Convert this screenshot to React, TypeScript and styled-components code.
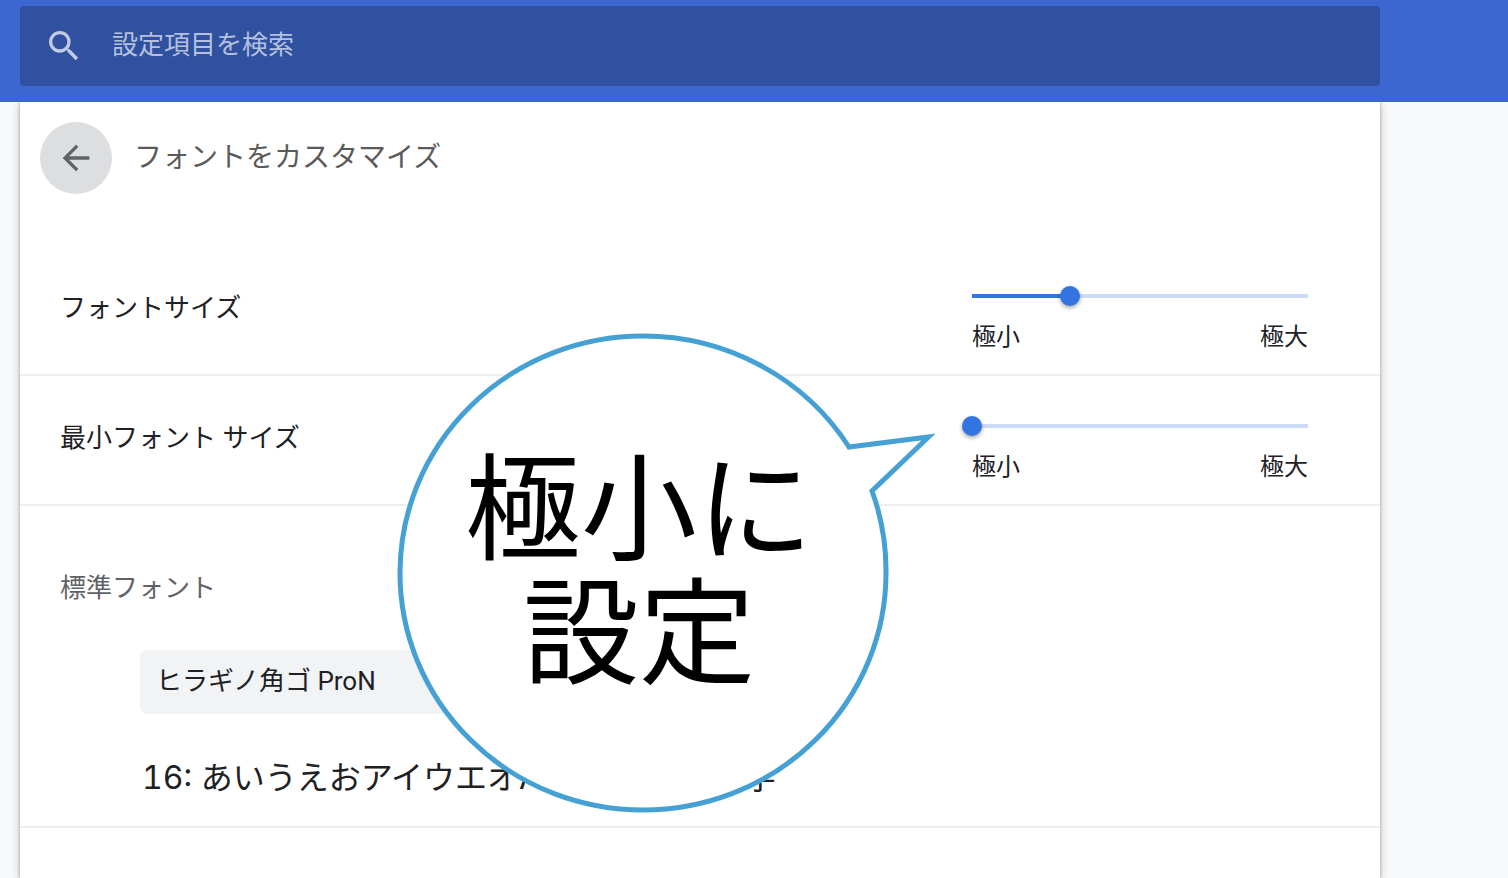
import React, { useState } from "react";
import styled, { createGlobalStyle } from "styled-components";
import { MdArrowBack, MdSearch } from "react-icons/md";

const GlobalStyle = createGlobalStyle`
  *, *::before, *::after { box-sizing: border-box; }
  body {
    margin: 0;
    background: #f8f9fb;
    color: #202124;
    font-family: Roboto, "Noto Sans CJK JP", sans-serif;
    font-size: 26px;
    line-height: 36px;
  }
`;

const Page = styled.div`
  display: flex;
  flex-direction: column;
  min-height: 100vh;
`;

const Toolbar = styled.header`
  position: relative;
  z-index: 1;
  padding: 6px 128px 16px 20px;
  background: #3c67d0;
`;

const SearchBox = styled.label`
  display: flex;
  align-items: center;
  gap: 28px;
  height: 80px;
  padding: 0 24px;
  border-radius: 4px;
  background: #3050a0;
  color: #c1cbe3;
`;

const SearchInput = styled.input`
  flex: 1;
  min-width: 0;
  height: 40px;
  padding: 0 0 2px;
  border: 0;
  outline: 0;
  background: transparent;
  color: #ffffff;
  font: inherit;

  &::placeholder {
    color: #b4c0de;
    opacity: 1;
  }
`;

const Content = styled.main`
  flex: 1;
  display: flex;
  padding: 0 128px 0 20px;
`;

const Card = styled.section`
  position: relative;
  flex: 1;
  min-width: 0;
  background: #ffffff;
  box-shadow: 0 2px 10px rgba(0, 0, 0, 0.2), 0 0 3px rgba(0, 0, 0, 0.3);
`;

const CardHeader = styled.div`
  display: flex;
  align-items: center;
  gap: 22px;
  height: 144px;
  padding: 20px 20px 52px;
`;

const BackButton = styled.button`
  display: flex;
  align-items: center;
  justify-content: center;
  width: 72px;
  height: 72px;
  padding: 0;
  border: 0;
  border-radius: 50%;
  background: #dddee0;
  color: #5f6368;
`;

const Title = styled.h1`
  margin: 0;
  color: #5a5a5a;
  font-size: 28px;
  font-weight: 400;
  line-height: 36px;
`;

const SettingRow = styled.div`
  display: flex;
  align-items: center;
  justify-content: space-between;
  height: 130px;
  padding: 0 72px 4px 40px;
  border-bottom: 2px solid #efefef;
`;

const SliderBlock = styled.div`
  width: 336px;
  padding-top: 25px;
`;

const Slider = styled.input<{ $ratio: number }>`
  appearance: none;
  display: block;
  width: calc(100% + 20px);
  height: 20px;
  margin: 0 -10px 13px;
  background: transparent;

  &::-webkit-slider-runnable-track {
    height: 4px;
    background: linear-gradient(
      to right,
      transparent 10px,
      #3274e0 10px,
      #3274e0 calc(10px + (100% - 20px) * ${(p) => p.$ratio}),
      #cbdcf8 calc(10px + (100% - 20px) * ${(p) => p.$ratio}),
      #cbdcf8 calc(100% - 10px),
      transparent calc(100% - 10px)
    );
  }

  &::-webkit-slider-thumb {
    appearance: none;
    width: 20px;
    height: 20px;
    margin-top: -8px;
    border-radius: 50%;
    background: #3274e0;
    box-shadow: 0 2px 4px rgba(0, 0, 0, 0.35);
  }
`;

const SliderEnds = styled.div`
  display: flex;
  justify-content: space-between;
  font-size: 24px;
`;

const FontSection = styled.div`
  padding: 64px 72px 28px 40px;
  border-bottom: 2px solid #efefef;
`;

const SectionLabel = styled.label`
  display: block;
  color: #5f6368;
`;

const FontSelect = styled.select`
  appearance: none;
  display: block;
  width: 400px;
  height: 64px;
  margin: 44px 0 44px 80px;
  padding: 0 16px 2px;
  border: 0;
  border-radius: 8px;
  background: #f1f3f4;
  color: #202124;
  font: inherit;
`;

const Sample = styled.p`
  margin: 0 0 0 82px;
  font-family: Inter, "Noto Sans CJK JP", sans-serif;
  font-size: 32px;
  font-variant-numeric: tabular-nums;
  line-height: 40px;
  white-space: nowrap;
`;

const Callout = styled.aside`
  position: absolute;
  top: 230px;
  right: 444px;
  width: 540px;
  height: 484px;
`;

const CalloutShape = styled.svg`
  display: block;
`;

const CalloutText = styled.p`
  position: absolute;
  top: 106px;
  left: 0;
  width: 486px;
  margin: 0;
  color: #000000;
  font-family: "Noto Sans CJK JP", sans-serif;
  font-size: 116px;
  line-height: 124px;
  text-align: center;
`;

interface SizeSettingProps {
  id: string;
  label: string;
  initial: number;
}

function SizeSetting({ id, label, initial }: SizeSettingProps) {
  const max = 24;
  const [value, setValue] = useState(initial);
  return (
    <SettingRow>
      <label htmlFor={id}>{label}</label>
      <SliderBlock>
        <Slider
          id={id}
          type="range"
          min={0}
          max={max}
          value={value}
          $ratio={value / max}
          onChange={(e) => setValue(Number(e.target.value))}
        />
        <SliderEnds>
          <span>極小</span>
          <span>極大</span>
        </SliderEnds>
      </SliderBlock>
    </SettingRow>
  );
}

export default function App() {
  return (
    <Page>
      <GlobalStyle />
      <Toolbar>
        <SearchBox>
          <MdSearch size={40} />
          <SearchInput type="text" placeholder="設定項目を検索" />
        </SearchBox>
      </Toolbar>
      <Content>
        <Card>
          <CardHeader>
            <BackButton type="button" aria-label="戻る">
              <MdArrowBack size={40} />
            </BackButton>
            <Title>フォントをカスタマイズ</Title>
          </CardHeader>
          <SizeSetting id="font-size" label="フォントサイズ" initial={7} />
          <SizeSetting id="min-font-size" label="最小フォント サイズ" initial={0} />
          <FontSection>
            <SectionLabel htmlFor="standard-font">標準フォント</SectionLabel>
            <FontSelect id="standard-font">
              <option>ヒラギノ角ゴ ProN</option>
            </FontSelect>
            <Sample>16: あいうえおアイウエオABCabc123 漢字</Sample>
          </FontSection>
          <Callout>
            <CalloutShape width="540" height="484" viewBox="0 0 540 484" aria-hidden="true">
              <path
                d="M453 115 A243 237 0 0 0 247 4 A243 237 0 0 0 4 241 A243 237 0 0 0 247 478 A243 237 0 0 0 490 241 A243 237 0 0 0 476 159 L532.5 105 Z"
                fill="#ffffff"
                stroke="#45a1d4"
                strokeWidth="5"
                strokeMiterlimit="10"
              />
            </CalloutShape>
            <CalloutText>
              極小に
              <br />
              設定
            </CalloutText>
          </Callout>
        </Card>
      </Content>
    </Page>
  );
}
